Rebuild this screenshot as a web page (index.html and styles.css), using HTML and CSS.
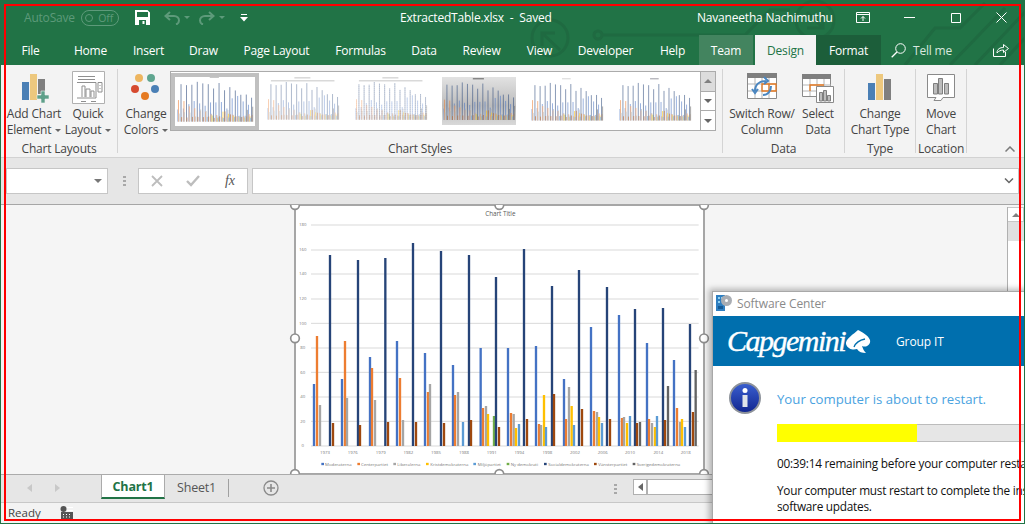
FILE: index.html
```html
<!DOCTYPE html>
<html lang="en">
<head>
<meta charset="utf-8">
<title>ExtractedTable.xlsx - Saved</title>
<link rel="stylesheet" href="styles.css">
</head>
<body>
<div class="window">
  <header class="titlebar">
    <svg class="circuit" viewBox="0 0 1025 65" aria-hidden="true">
      <g fill="none" stroke="#1f6a41" stroke-width="3">
        <circle cx="550" cy="38" r="18"/><path d="M542 46V33H555M542 33L560 50"/>
        <circle cx="598" cy="35" r="4"/><path d="M602 35H745L770 10H790"/>
        <circle cx="815" cy="20" r="19"/><path d="M807 12L823 28M823 12V28H807"/>
        <path d="M905 65L935 28H960L985 3M950 65L1005 8M975 65L1025 12M1000 65L1025 38"/>
      </g>
    </svg>
    <div class="title-row">
      <div class="quick">
        <span class="autosave">AutoSave</span>
        <span class="toggle"><i></i>Off</span>
        <svg class="qa-save" width="15" height="15" viewBox="0 0 15 15"><path fill="#fff" d="M0 0H12.5L15 2.5V15H0ZM2 2V7H13V2ZM4 10V15H11V10ZM7.500 11H9.500V14H7.500Z" fill-rule="evenodd"/></svg>
        <svg class="qa-undo" width="16" height="14" viewBox="0 0 16 14"><path fill="none" stroke="#5d9a7a" stroke-width="2" d="M6 1L1.500 5L6 9M2 5H10C13 5 15 7 15 9.500C15 11.500 13.500 13 12 13.500"/></svg>
        <span class="caret faint"></span>
        <svg class="qa-redo" width="16" height="14" viewBox="0 0 16 14"><path fill="none" stroke="#5d9a7a" stroke-width="2" d="M10 1L14.500 5L10 9M14 5H6C3 5 1 7 1 9.500C1 11.500 2.500 13 4 13.500"/></svg>
        <span class="caret faint"></span>
        <svg class="qa-more" width="8" height="8" viewBox="0 0 8 8"><path fill="#fff" d="M1 0H7V1H1ZM0 3H8L4 7.500Z"/></svg>
      </div>
      <div class="doc-name">ExtractedTable.xlsx&nbsp; -&nbsp; Saved</div>
      <div class="user">Navaneetha Nachimuthu</div>
      <div class="win-controls">
        <svg width="14" height="11" viewBox="0 0 14 11"><path fill="none" stroke="#fff" d="M.5 .5H13.500V10.500H.5ZM.5 2.500H13.500M7 9V4.500M5 6.500L7 4.500L9 6.500"/></svg>
        <svg class="win-min" width="11" height="1" viewBox="0 0 11 1"><path stroke="#fff" d="M0 .5H11"/></svg>
        <svg class="win-max" width="10" height="10" viewBox="0 0 10 10"><path fill="none" stroke="#fff" d="M.5 .5H9.500V9.500H.5Z"/></svg>
        <svg class="win-close" width="11" height="11" viewBox="0 0 11 11"><path stroke="#fff" d="M.5 .5L10.500 10.500M10.500 .5L.5 10.500"/></svg>
      </div>
    </div>
    <nav class="tabs">
      <span>File</span><span>Home</span><span>Insert</span><span>Draw</span><span>Page Layout</span><span>Formulas</span><span>Data</span><span>Review</span><span>View</span><span>Developer</span><span>Help</span>
      <span class="tab-team">Team</span><span class="tab-design">Design</span><span class="tab-format">Format</span>
      <span class="tell-me">
        <svg width="15" height="15" viewBox="0 0 15 15"><g fill="none" stroke="#fff"><circle cx="9.500" cy="5.500" r="4.800"/><path d="M6 9L.7 14.300" stroke-width="1.300"/></g></svg>
        Tell me
      </span>
      <svg class="share" width="16" height="14" viewBox="0 0 16 14"><path fill="none" stroke="#fff" d="M.5 5.500V13.500H12.500V9M4 10C4 6 7 4.500 10.500 4.500V1.500L15.500 5.500L10.500 9.500V7C8 7 5.500 8 4 10Z"/></svg>
    </nav>
  </header>

  <section class="ribbon">
    <div class="group g-layouts">
      <div class="group-body">
        <div class="rb-btn w-add">
          <svg class="rb-icon" width="32" height="33" viewBox="-2 0 32 33"><path fill="#4a7fb5" d="M2 11H9V29H2Z"/><path fill="#edc87e" d="M10 3H17V29H10Z"/><path fill="#7f7f7f" d="M18 8H25V23H18Z"/><path fill="#5fa08a" d="M21 20H25V24H29V28H25V32H21V28H17V24H21Z" stroke="#f3f3f3" stroke-width=".6"/></svg>
          <span>Add Chart</span><span>Element<b class="caret"></b></span>
        </div>
        <div class="rb-btn w-quick">
          <svg class="rb-icon" width="33" height="33" viewBox="0 0 33 33"><g fill="#fff" stroke="#b0b0b0"><path d="M.5 .5H32.500V32.500H.5Z" stroke-width="1"/></g><g fill="none" stroke="#8f8f8f"><path d="M6 5.500H23M6 8.500H23M5 11.500H24V27H5M10 26V15H13V26M14 26V18H18V26M19 26V20H22V26M26 11.500H30V21H26Z"/><path d="M9 30.500H14M19 30.500H24M28 14V15M28 17V18"/></g></svg>
          <span>Quick</span><span>Layout<b class="caret"></b></span>
        </div>
      </div>
      <div class="group-label">Chart Layouts</div>
    </div>

    <div class="group g-styles">
      <div class="group-body">
        <div class="rb-btn w-colors">
          <svg class="rb-icon" width="32" height="33" viewBox="0 0 32 33"><circle cx="9" cy="7" r="4" fill="#edb55f"/><circle cx="21" cy="7" r="4" fill="#5fa58f"/><circle cx="5" cy="18" r="4" fill="#d64a2f"/><circle cx="25" cy="18" r="4" fill="#4a7fb5"/><circle cx="15" cy="25" r="4" fill="#e57a22"/></svg>
          <span>Change</span><span>Colors<b class="caret"></b></span>
        </div>
        <div class="gallery">
          <div class="thumb selected"><svg viewBox="40 55 1200 750"><use href="#bars" class="mini"/><path d="M560 62H700" stroke="#666" stroke-width="6"/></svg></div>
          <div class="thumb"><svg viewBox="40 55 1200 780"><use href="#bars" class="mini pale"/><path d="M500 62H760M120 110H1150" stroke="#888" stroke-width="8"/></svg></div>
          <div class="thumb"><svg viewBox="40 55 1200 780"><use href="#bars" class="mini dotted"/><path d="M500 62H760M120 110H1150" stroke="#888" stroke-width="8"/></svg></div>
          <div class="thumb grad"><svg viewBox="40 55 1200 750"><use href="#bars" class="mini"/><path d="M540 70H720" stroke="#333" stroke-width="12"/></svg></div>
          <div class="thumb"><svg viewBox="40 55 1200 750"><use href="#bars" class="mini"/><path d="M560 62H700" stroke="#888" stroke-width="6"/></svg></div>
          <div class="thumb"><svg viewBox="40 55 1200 750"><use href="#bars" class="mini"/><path d="M560 62H700" stroke="#334" stroke-width="8"/></svg></div>
          <div class="gallery-scroll">
            <span class="gs-up"><i class="tri up"></i></span>
            <span><i class="tri"></i></span>
            <span class="gs-more"><i class="tri"></i></span>
          </div>
        </div>
      </div>
      <div class="group-label">Chart Styles</div>
    </div>

    <div class="group g-data">
      <div class="group-body">
        <div class="rb-btn w-switch">
          <svg class="rb-icon" width="30" height="33" viewBox="0 0 30 33"><path fill="#fff" stroke="#8a8a8a" d="M.5 2.500H29.500V27.500H.5Z"/><path fill="#7f7f7f" d="M0 2H30V7H0Z"/><path stroke="#b5b5b5" fill="none" d="M1 13H29M1 20H29M8 7V27M15 7V27M22 7V27"/><path fill="none" stroke="#e57a22" stroke-width="1.300" d="M15 13H22V20H15ZM22 13H29V20H22Z"/><path fill="none" stroke="#4a86c0" stroke-width="2" d="M8 20C8 14 12 10 19 10M16 24C21 24 24 20 24 15M17 6L21 10L17 13M5 18L8 22L11 18"/></svg>
          <span>Switch Row/</span><span>Column</span>
        </div>
        <div class="rb-btn w-select">
          <svg class="rb-icon" width="32" height="33" viewBox="0 0 32 33"><path fill="#fff" stroke="#8a8a8a" d="M.5 3.500H28.500V25.500H.5Z"/><path fill="#7f7f7f" d="M0 3H29V8H0Z"/><path stroke="#b5b5b5" fill="none" d="M1 14H29M1 20H29M8 8V25M15 8V25M22 8V25"/><path fill="none" stroke="#e57a22" stroke-width="1.300" d="M8 20V14H22"/><path fill="#fff" stroke="#8a8a8a" d="M14.500 15.500H31.500V31.500H14.500Z"/><path fill="#bdbdbd" stroke="#7f7f7f" d="M17.500 21.500H20.500V30H17.500ZM21.500 19.500H24.500V30H21.500ZM25.500 24.500H28.500V30H25.500Z"/></svg>
          <span>Select</span><span>Data</span>
        </div>
      </div>
      <div class="group-label">Data</div>
    </div>

    <div class="group g-type">
      <div class="group-body">
        <div class="rb-btn w-full">
          <svg class="rb-icon" width="32" height="33" viewBox="0 0 32 33"><path fill="#4a7fb5" d="M4 12H11V29H4Z"/><path fill="#edc87e" d="M12 3H19V29H12Z"/><path fill="#7f7f7f" d="M20 8H27V29H20Z"/></svg>
          <span>Change</span><span>Chart Type</span>
        </div>
      </div>
      <div class="group-label">Type</div>
    </div>

    <div class="group g-location">
      <div class="group-body">
        <div class="rb-btn w-full">
          <svg class="rb-icon" width="32" height="33" viewBox="0 0 32 33"><path fill="#fff" stroke="#8a8a8a" d="M2.500 3.500H29.500V26.500H18L16 29.500H9L11 26.500H2.500Z"/><path fill="#bdbdbd" stroke="#7f7f7f" d="M8.500 12.500H12.500V23H8.500ZM13.500 7.500H17.500V23H13.500ZM19.500 12.500H23.500V23H19.500Z"/></svg>
          <span>Move</span><span>Chart</span>
        </div>
      </div>
      <div class="group-label">Location</div>
    </div>

    <svg class="collapse" width="10" height="6" viewBox="0 0 10 6"><path fill="none" stroke="#7a7a7a" stroke-width="1.500" d="M.5 5.500L5 1L9.500 5.500"/></svg>
  </section>

  <section class="formula">
    <div class="name-box"><i class="tri"></i></div>
    <div class="grip"></div>
    <div class="fx-box">
      <svg width="12" height="12" viewBox="0 0 12 12"><path stroke="#bdbdbd" stroke-width="1.800" d="M1 1L11 11M11 1L1 11"/></svg>
      <svg width="14" height="12" viewBox="0 0 14 12"><path fill="none" stroke="#bdbdbd" stroke-width="2.400" d="M1 6L5 10L13 1"/></svg>
      <span class="fx">fx</span>
    </div>
    <div class="formula-input">
      <svg width="10" height="6" viewBox="0 0 10 6"><path fill="none" stroke="#666" stroke-width="1.500" d="M1 .5L5 4.500L9 .5"/></svg>
    </div>
  </section>

  <main class="sheet">
    <svg class="chart" width="430" height="270" viewBox="-15 15 1290 810">
      <defs>
        <g id="bars" fill="none">
          <path stroke="#4472c4" d="M72 738V552M156 738V537M240 738V471M321 738V423M405 738V459M489 738V495M572 738V444M654 738V444M738 738V438M822 738V537M903 738V381M987 738V345M1071 738V429M1152 738V480"/>
          <path stroke="#ed7d31" d="M81 738V408M165 738V423M246 738V504M330 738V534M414 738V576M495 738V585M579 738V624M663 738V639M747 738V672M828 738V657M912 738V633M996 738V654M1077 738V657M1161 738V624"/>
          <path stroke="#a5a5a5" d="M90 738V615M171 738V594M255 738V600M339 738V660M420 738V552M504 738V576M588 738V618M671 738V642M753 738V675M837 738V561M921 738V636M1002 738V651M1086 738V669M1170 738V666"/>
          <path stroke="#ffc000" d="M594 738V642M678 738V684M762 738V585M845 738V618M927 738V651M1011 738V669M1095 738V681M1176 738V657"/>
          <path stroke="#5b9bd5" d="M519 738V666M687 738V672M768 738V681M852 738V675M936 738V669M1020 738V648M1101 738V648M1185 738V681"/>
          <path stroke="#70ad47" d="M612 738V648"/>
          <path stroke="#264478" d="M120 738V165M204 738V180M286 738V174M369 738V129M453 738V153M537 738V165M618 738V231M702 738V147M786 738V258M867 738V210M951 738V261M1035 738V327M1119 738V324M1200 738V372"/>
          <path stroke="#9e480e" d="M129 738V669M210 738V675M294 738V666M378 738V666M462 738V669M543 738V660M627 738V681M711 738V657M792 738V582M876 738V627M960 738V657M1041 738V669M1125 738V660M1209 738V636"/>
          <path stroke="#636363" d="M1050 738V666M1134 738V558M1217 738V510"/>
        </g>
      </defs>
      <rect class="chart-bg" x="15" y="15" width="1227" height="807"/>
      <text class="chart-title" x="631" y="47">Chart Title</text>
      <path class="grid" d="M63 75H1226M63 150H1226M63 222H1226M63 297H1226M63 370H1226M63 444H1226M63 517H1226M63 591H1226M63 664H1226M63 738H1226"/>
      <g class="axis-y">
        <text x="38" y="79">180</text><text x="38" y="154">160</text><text x="38" y="226">140</text><text x="38" y="301">120</text><text x="38" y="374">100</text><text x="38" y="448">80</text><text x="38" y="521">60</text><text x="38" y="595">40</text><text x="38" y="668">20</text><text x="38" y="742">0</text>
      </g>
      <use href="#bars" class="main-bars"/>
      <g class="axis-x">
        <text x="105" y="761">1973</text><text x="188" y="761">1976</text><text x="272" y="761">1979</text><text x="355" y="761">1982</text><text x="438" y="761">1985</text><text x="522" y="761">1988</text><text x="605" y="761">1991</text><text x="688" y="761">1994</text><text x="772" y="761">1998</text><text x="855" y="761">2002</text><text x="938" y="761">2006</text><text x="1020" y="761">2010</text><text x="1105" y="761">2014</text><text x="1187" y="761">2018</text>
      </g>
      <g class="legend">
        <path stroke="#4472c4" d="M94 792H102"/><text x="105" y="797">Moderaterna</text>
        <path stroke="#ed7d31" d="M202 792H210"/><text x="213" y="797">Centerpartiet</text>
        <path stroke="#a5a5a5" d="M310 792H318"/><text x="322" y="797">Liberalerna</text>
        <path stroke="#ffc000" d="M408 792H416"/><text x="421" y="797">Kristdemokraterna</text>
        <path stroke="#5b9bd5" d="M550 792H558"/><text x="563" y="797">Miljöpartiet</text>
        <path stroke="#70ad47" d="M650 792H658"/><text x="662" y="797">Ny demokrati</text>
        <path stroke="#264478" d="M762 792H770"/><text x="775" y="797">Socialdemokraterna</text>
        <path stroke="#9e480e" d="M912 792H920"/><text x="925" y="797">Vänsterpartiet</text>
        <path stroke="#636363" d="M1028 792H1036"/><text x="1040" y="797">Sverigedemokraterna</text>
      </g>
      <rect class="chart-frame" x="15" y="15" width="1227" height="807"/>
      <g class="handles">
        <circle cx="15" cy="15" r="13"/><circle cx="628" cy="15" r="13"/><circle cx="1242" cy="15" r="13"/>
        <circle cx="15" cy="415" r="13"/><circle cx="1242" cy="415" r="13"/>
        <circle cx="15" cy="822" r="13"/><circle cx="628" cy="822" r="13"/><circle cx="1242" cy="822" r="13"/>
      </g>
    </svg>
    <div class="vscroll">
      <span class="vs-up"><i class="tri up"></i></span>
      <span class="vs-thumb"></span>
    </div>
  </main>

  <section class="sheet-tabs">
    <div class="nav-arrows"><i class="arrow-l"></i><i class="arrow-r"></i></div>
    <div class="tab-active">Chart1</div>
    <div class="tab-plain">Sheet1</div>
    <svg class="add-sheet" width="16" height="16" viewBox="0 0 16 16"><circle cx="8" cy="8" r="7" fill="none" stroke="#8a8a8a" stroke-width="1.300"/><path stroke="#8a8a8a" stroke-width="1.600" d="M4 8H12M8 4V12"/></svg>
    <div class="grip"></div>
    <div class="hscroll"><span class="hs-left"><i class="arrow-l dark"></i></span></div>
  </section>

  <footer class="status">
    <span>Ready</span>
    <svg width="14" height="13" viewBox="0 0 14 13"><circle cx="3.500" cy="3" r="3" fill="#555"/><path fill="#555" d="M1 6H13V13H1Z"/><path fill="#fff" d="M7 1H13V2H7ZM7 4H13V5H7ZM3 8H4V9H3ZM6 8H7V9H6ZM9 8H10V9H9ZM3 10.500H4V11.500H3ZM6 10.500H7V11.500H6ZM9 10.500H10V11.500H9Z"/></svg>
  </footer>

  <aside class="dialog">
    <div class="dlg-title">
      <svg width="16" height="18" viewBox="0 0 16 18"><path fill="#2f7fc1" d="M0 1H9V17H0Z"/><path fill="#8fd0f0" d="M2 3H4V5H2ZM5 3H7V5H5ZM2 7H4V9H2Z"/><path fill="#155a94" d="M2 12H7V15H2Z"/><circle cx="10.500" cy="6.500" r="5.500" fill="#a9adb3"/><circle cx="10.500" cy="6.500" r="1.500" fill="#fff"/></svg>
      <span>Software Center</span>
    </div>
    <div class="dlg-brand">
      <span class="logo">Capgemini</span>
      <svg width="26" height="25" viewBox="0 0 26 25"><path fill="#fff" d="M13 1C17 3 23 6 25 11C26 15 22 19 17 17C18 20 19 22 21 24C17 24 14 23 12 20C9 21 3 21 1 15C0 10 9 5 13 1Z"/><path fill="none" stroke="#006fae" stroke-width="1.300" d="M9 18C11 13 15 11 20 10"/></svg>
      <span class="group-it">Group IT</span>
    </div>
    <div class="dlg-body">
      <svg class="info" width="32" height="32" viewBox="0 0 32 32"><defs><linearGradient id="infoFill" x1="0" y1="0" x2="0" y2="1"><stop offset="0" stop-color="#3b60d0"/><stop offset="1" stop-color="#10258f"/></linearGradient></defs><circle cx="16" cy="16" r="15" fill="url(#infoFill)" stroke="#8d929a" stroke-width="2"/><circle cx="16" cy="8.500" r="2.500" fill="#fff"/><path fill="#dfe3ea" d="M13.500 13H18.500V25H13.500Z"/></svg>
      <div class="dlg-content">
        <p class="dlg-head">Your computer is about to restart.</p>
        <div class="progress"><span class="progress-fill"></span></div>
        <p class="dlg-time">00:39:14 remaining before your computer restarts.</p>
        <p class="dlg-msg">Your computer must restart to complete the installation of<br>software updates.</p>
      </div>
    </div>
  </aside>

  <div class="red-frame"></div>
</div>
</body>
</html>
```
FILE: styles.css
```css
* { box-sizing: border-box; }
html, body { margin: 0; padding: 0; background: #fff; overflow: hidden; }
body { width: 1025px; height: 525px; font-family: "Open Sans", "Liberation Sans", sans-serif; font-size: 12px; color: #444; }
p { margin: 0; }

.window { position: relative; width: 1025px; height: 524px; border: 1px solid #217346; border-width: 0 1px 1px; overflow: hidden; display: flex; flex-direction: column; background: #f3f3f3; }

/* title bar */
.titlebar { position: relative; height: 65px; flex: none; background: #217346; color: #fff; }
.circuit { position: absolute; left: -1px; top: 0; width: 1025px; height: 65px; }
.title-row { position: relative; height: 35px; display: flex; align-items: center; letter-spacing: -.2px; }
.quick { width: 399px; flex: none; display: flex; align-items: center; padding-left: 23px; }
.autosave { color: #5d9a7a; width: 57px; }
.toggle { width: 38px; height: 16px; border: 1px solid #5d9a7a; border-radius: 8px; color: #5d9a7a; display: flex; align-items: center; justify-content: flex-end; gap: 3px; padding-right: 5px; font-size: 10.500px; }
.toggle i { width: 8px; height: 8px; border-radius: 50%; border: 1px solid #5d9a7a; margin-right: auto; margin-left: 3px; }
.qa-save { margin-left: 16px; }
.qa-undo { margin-left: 14px; }
.qa-redo { margin-left: 9px; }
.qa-more { margin-left: 15px; }
.caret { display: inline-block; width: 0; height: 0; border: 3px solid transparent; border-top: 3px solid #666; border-bottom: 0; margin-left: 3px; vertical-align: 2px; }
.caret.faint { border-top-color: #5d9a7a; margin-left: 4px; }
.doc-name { width: 297px; flex: none; white-space: nowrap; }
.user { width: 159px; flex: none; white-space: nowrap; }
.win-controls { display: flex; align-items: center; }
.win-min { margin-left: 34px; }
.win-max { margin-left: 36px; }
.win-close { margin-left: 35px; }

.tabs { position: relative; height: 30px; display: grid; grid-template-columns: 59px 61px 55px 55px 91px 77px 50px 65px 51px 81px 53px 56px 61px 65px 110px 34px; align-items: stretch; letter-spacing: -.2px; }
.tabs > span { display: flex; align-items: center; justify-content: center; white-space: nowrap; }
.tabs .tab-team { background: #43845f; margin-right: 2px; }
.tabs .tab-design { background: #f3f3f3; color: #217346; }
.tabs .tab-format { background: #1c5e3a; }
.tabs .tell-me { justify-content: flex-start; padding-left: 10px; gap: 7px; color: #d8e8df; }
.share { align-self: center; margin-left: 2px; }

/* ribbon */
.ribbon { position: relative; height: 93px; flex: none; display: flex; padding-top: 4px; background: #f3f3f3; border-bottom: 1px solid #d2d2d2; letter-spacing: -.2px; }
.group { height: 84px; border-right: 1px solid #d4d4d4; display: flex; flex-direction: column; flex: none; }
.group-body { height: 72px; flex: none; display: flex; }
.group-label { height: 16px; flex: none; line-height: 16px; text-align: center; white-space: nowrap; color: #444; }
.g-layouts { width: 117px; }
.g-layouts .group-body { padding-left: 5px; }
.g-styles { width: 605px; }
.g-styles .group-body { padding-left: 4px; }
.g-data { width: 122px; }
.g-data .group-body { padding-left: 2px; }
.g-type { width: 71px; }
.g-location { width: 51px; }
.rb-btn { display: flex; flex-direction: column; align-items: center; padding-top: 2px; line-height: 16px; white-space: nowrap; flex: none; }
.rb-icon { margin-bottom: 2px; flex: none; }
.rb-btn .caret { margin-left: 4px; }
.w-add { width: 56px; }
.w-quick { width: 52px; }
.w-colors { width: 48px; }
.w-switch { width: 74px; }
.w-select { width: 38px; }
.w-full { width: 100%; }
.collapse { position: absolute; right: 9px; bottom: 5px; }

.gallery { margin-top: 2px; width: 546px; height: 60px; border: 1px solid #ababab; background: #fff; display: flex; flex: none; }
.thumb { width: 88px; height: 58px; padding: 5px 7px 4px; flex: none; }
.thumb svg { display: block; width: 100%; height: 100%; }
.thumb.selected { border: 4px solid #c0c0c0; border-width: 4px; padding: 0; height: 57px; margin-top: 1px; }
.thumb.grad { padding: 5px 7px; }
.thumb.grad svg { background: linear-gradient(#e2e2e2, #bcbcbc 60%, #d8d8d8); }
.mini { stroke-width: 14; opacity: .62; }
.mini.pale { opacity: .42; }
.mini.dotted { stroke-dasharray: 7 4; opacity: .65; }
.gallery-scroll { margin-left: auto; width: 15px; flex: none; display: flex; flex-direction: column; border-left: 1px solid #ababab; }
.gallery-scroll span { flex: 1; display: flex; align-items: center; justify-content: center; border-bottom: 1px solid #ababab; }
.gallery-scroll span:last-child { border-bottom: 0; }
.gs-up { background: #dcdcdc; }
.gs-up .tri { border-top-color: transparent; border-bottom-color: #b5b5b5; }
.gs-more .tri { box-shadow: 0 -3px 0 -2px #666; }
.tri { display: block; width: 0; height: 0; border: 4px solid transparent; border-top: 4px solid #666; border-bottom: 0; }
.tri.up { border-top: 0; border-bottom: 4px solid #808080; }

/* formula bar */
.formula { height: 46px; flex: none; background: #e6e6e6; display: flex; align-items: flex-start; padding: 10px 5px 0 5px; }
.name-box { width: 102px; height: 26px; background: #fff; border: 1px solid #c6c6c6; display: flex; align-items: center; justify-content: flex-end; padding-right: 5px; }
.name-box .tri { border-width: 4px 4.500px 0; border-top-color: #777; }
.grip { width: 3px; height: 10px; margin: 8px 12px 0 15px; flex: none; background: repeating-linear-gradient(#a8a8a8 0 2px, transparent 2px 4px); }
.fx-box { width: 110px; height: 26px; background: #fff; border: 1px solid #c6c6c6; display: flex; align-items: center; padding-left: 12px; gap: 23px; }
.fx { font-family: "Liberation Serif", serif; font-style: italic; font-size: 14px; color: #555; margin-left: 2px; }
.formula-input { width: 768px; height: 26px; margin-left: 4px; background: #fff; border: 1px solid #c6c6c6; display: flex; align-items: center; justify-content: flex-end; padding-right: 4px; }

/* sheet */
.sheet { height: 270px; flex: none; display: flex; background: #f5f5f5; border-top: 1px solid #a6a6a6; overflow: hidden; }
.chart { display: block; margin-left: 284px; flex: none; font-family: "Open Sans", sans-serif; }
.chart-bg { fill: #fff; }
.chart-frame { fill: none; stroke: #a6a6a6; stroke-width: 6; }
.chart-title { font-size: 19px; fill: #595959; text-anchor: middle; }
.grid { stroke: #d9d9d9; stroke-width: 3; fill: none; }
.axis-y text { font-size: 13px; fill: #777; text-anchor: middle; }
.axis-x text { font-size: 13px; fill: #777; text-anchor: middle; }
.legend text { font-size: 13px; fill: #777; }
.legend path { stroke-width: 7; }
.main-bars { stroke-width: 7; }
.handles circle { fill: #fff; stroke: #8e8e8e; stroke-width: 5; }
.vscroll { margin-left: auto; width: 17px; flex: none; margin-top: 2px; background: #fff; border-left: 1px solid #b0b0b0; display: flex; flex-direction: column; }
.vs-up { height: 15px; display: flex; align-items: center; justify-content: center; border: 1px solid #c6c6c6; border-left: 0; }
.vs-thumb { height: 19px; background: #e0e0e0; }

/* sheet tabs */
.sheet-tabs { height: 29px; flex: none; display: flex; align-items: flex-start; background: #e6e6e6; border-top: 1px solid #ababab; border-bottom: 1px solid #c8c8c8; }
.nav-arrows { width: 100px; flex: none; display: flex; gap: 23px; padding: 9px 0 0 26px; }
.nav-arrows i, .hs-left i { display: block; width: 0; height: 0; border: 4px solid transparent; }
.arrow-l { border-left: 0 !important; border-right: 5px solid #c8c8c8 !important; }
.arrow-r { border-right: 0 !important; border-left: 5px solid #c8c8c8 !important; }
.arrow-l.dark { border-right-color: #666 !important; }
.tab-active { width: 64px; height: 24px; padding-top: 1px; background: #fff; border-bottom: 2px solid #217346; border-left: 1px solid #ababab; border-right: 1px solid #ababab; color: #217346; font-weight: 700; font-size: 12.500px; line-height: 22px; text-align: center; flex: none; letter-spacing: -.2px; }
.tab-plain { width: 64px; height: 18px; margin-top: 4px; border-right: 1px solid #a0a0a0; line-height: 18px; text-align: center; font-size: 12.500px; color: #555; flex: none; letter-spacing: -.2px; }
.add-sheet { margin: 5px 0 0 34px; flex: none; }
.sheet-tabs .grip { margin: 9px 0 0 335px; }
.hscroll { margin: 4px 0 0 16px; flex: none; width: 100px; height: 16px; background: #fff; border: 1px solid #b0b0b0; border-right: 0; }
.hs-left { display: flex; align-items: center; justify-content: center; width: 14px; height: 14px; border-right: 2px solid #b0b0b0; }

/* status */
.status { height: 20px; flex: none; background: #f3f3f3; display: flex; align-items: flex-start; gap: 19px; padding: 2px 0 0 7px; font-size: 11.500px; line-height: 16px; color: #444; }
.status svg { margin-top: 1px; }

/* dialog */
.dialog { position: absolute; left: 711px; top: 291px; width: 400px; height: 240px; background: #fff; border: 1px solid #a8a8a8; box-shadow: -3px -2px 6px rgba(0,0,0,.28); }
.dlg-title { height: 24px; display: flex; align-items: center; gap: 5px; padding: 0 0 2px 3px; color: #8a8a8a; letter-spacing: -.1px; }
.dlg-brand { height: 50px; background: #006fae; color: #fff; display: flex; align-items: center; padding-left: 14px; }
.logo { font-family: "Liberation Serif", serif; font-style: italic; font-size: 30px; line-height: 50px; letter-spacing: -1.500px; width: 117px; white-space: nowrap; -webkit-text-stroke: .4px #fff; }
.dlg-brand svg { flex: none; margin-left: 1px; }
.group-it { margin-left: 25px; letter-spacing: -.1px; }
.dlg-body { display: flex; padding: 16px 0 0 16px; }
.info { flex: none; }
.dlg-content { margin-left: 16px; color: #111; white-space: nowrap; font-size: 11.800px; letter-spacing: -.25px; }
.dlg-head { color: #4aa3df; font-size: 13.200px; line-height: 20px; margin-top: 7px; letter-spacing: 0; }
.progress { width: 300px; height: 18px; margin-top: 15px; background: #e6e6e6; border: 1px solid #bcbcbc; border-width: 1px 1px 1px 0; }
.progress-fill { display: block; width: 140px; height: 18px; margin-top: -1px; background: #ffff00; }
.dlg-time { margin-top: 13px; line-height: 16px; }
.dlg-msg { margin-top: 11px; line-height: 16px; }

.red-frame { position: absolute; left: 3px; top: 4px; width: 1017px; height: 517px; border: 2px solid #f00; pointer-events: none; }
```
